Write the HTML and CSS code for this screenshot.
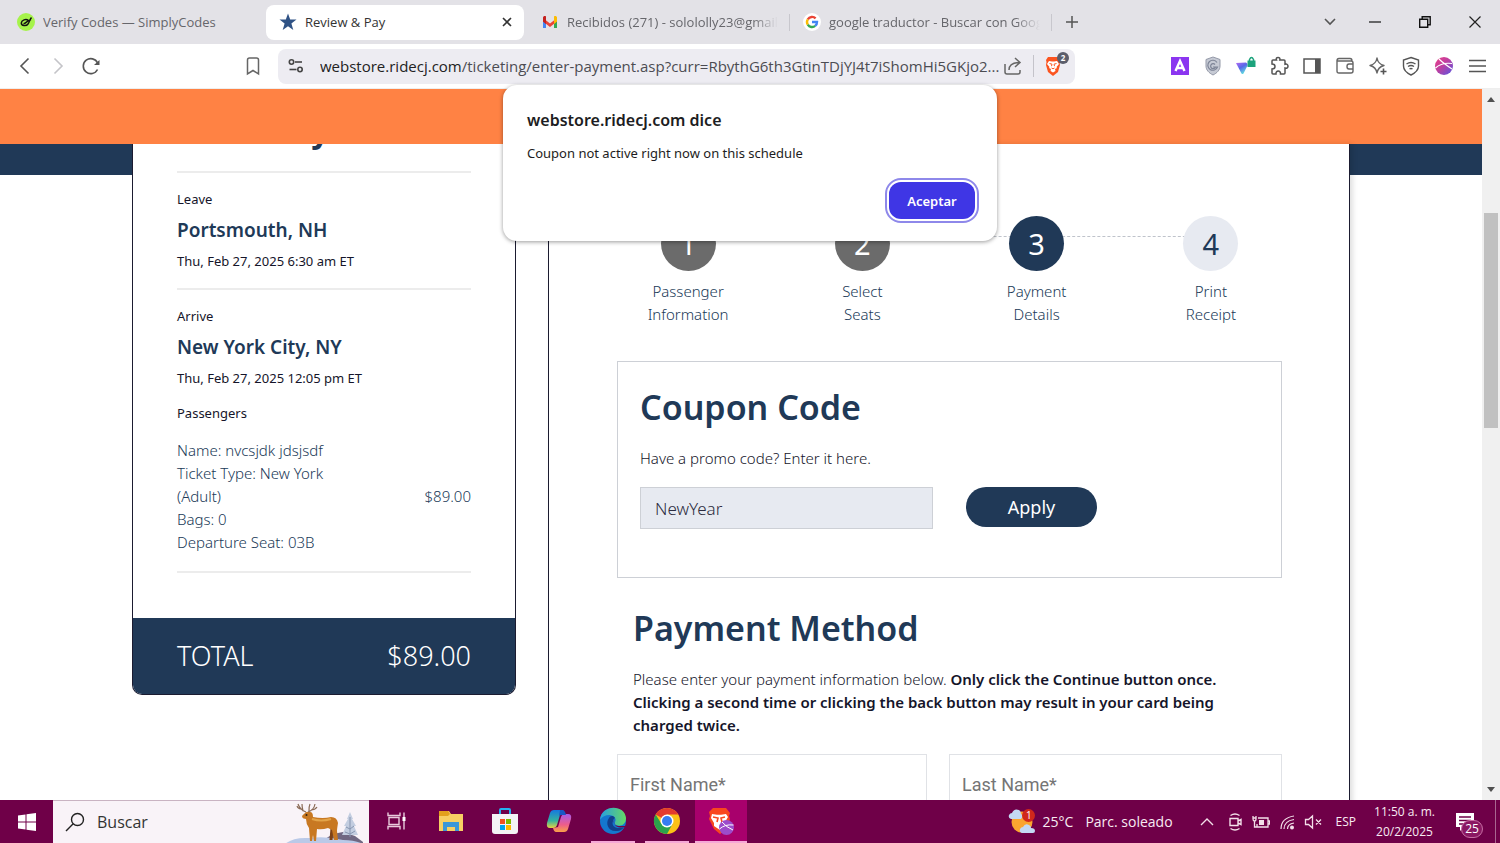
FILE: index.html
```
<!DOCTYPE html>
<html lang="en">
<head>
    <meta charset="UTF-8">
    <meta name="viewport" content="width=device-width, initial-scale=1.0">
    <title>Review &amp; Pay</title>
    <link rel="stylesheet" href="styles.css">
</head>
<body>
    <!-- Tabs -->
    <header class="tab-bar">
        <div class="tab">
            <svg class="favicon" viewBox="0 0 18 18"><circle cx="9" cy="9" r="9" fill="#a6f34b"/><path d="M11.500 7.500C9 5.500 4.500 7 4.300 10c0 3 5 3.500 6.700 1C12.500 9.500 12 7.500 14.500 4.500M6.500 10.500c2 .5 3.500-3 7.500-4" fill="none" stroke="#111" stroke-width="1.500"/></svg>
            <span class="tab-title">Verify Codes — SimplyCodes</span>
        </div>
        <div class="tab active">
            <svg class="favicon" viewBox="0 0 18 18"><path d="M9 .5l2.200 6H17.500l-5.100 4 1.900 6.500L9 13.200 3.700 17l1.900-6.500L.5 6.500h6.300z" fill="#2f5285"/></svg>
            <span class="tab-title">Review &amp; Pay</span>
            <button class="tab-close" aria-label="Close tab"><svg width="10" height="10" viewBox="0 0 10 10"><path d="M1 1l8 8M9 1L1 9" stroke="#333" stroke-width="1.600"/></svg></button>
        </div>
        <div class="tab divided">
            <svg class="favicon" viewBox="0 0 18 18"><path d="M2 4v11h3V8z" fill="#4285f4"/><path d="M16 4v11h-3V8z" fill="#34a853"/><path d="M2 5l7 5.500L16 5v3.500L9 14 2 8.500z" fill="#ea4335"/><path d="M2 8.500V5c0-2 2-2.500 3-1.500V11z" fill="#c5221f"/><path d="M16 8.500V5c0-2-2-2.500-3-1.500V11z" fill="#fbbc04"/></svg>
            <span class="tab-title faded">Recibidos (271) - solololly23@gmail</span>
        </div>
        <div class="tab divided">
            <svg class="favicon" viewBox="0 0 18 18"><circle cx="9" cy="9" r="9" fill="#fff"/><g fill="none" stroke-width="2.400"><path d="M4.800 6.300A5 5 0 0 1 12.600 5.400" stroke="#ea4335"/><path d="M4.800 6.300a5 5 0 0 0 0 5.400" stroke="#fbbc05"/><path d="M4.800 11.700a5 5 0 0 0 7.400 1.200" stroke="#34a853"/><path d="M12.200 12.900A5 5 0 0 0 14 9H9" stroke="#4285f4"/></g></svg>
            <span class="tab-title faded">google traductor - Buscar con Goog</span>
        </div>
        <button class="new-tab" aria-label="New tab"><svg width="12" height="12" viewBox="0 0 12 12"><path d="M6 0v12M0 6h12" stroke="#555" stroke-width="1.500"/></svg></button>
        <div class="window-controls">
            <button class="tab-search" aria-label="Search tabs"><svg width="12" height="12" viewBox="0 0 12 12"><path d="M1 3l5 5 5-5" fill="none" stroke="#555" stroke-width="1.600"/></svg></button>
            <button aria-label="Minimize"><svg width="12" height="12" viewBox="0 0 12 12"><path d="M0 6h12" stroke="#222" stroke-width="1.300"/></svg></button>
            <button aria-label="Restore"><svg width="12" height="12" viewBox="0 0 12 12"><path d="M.7 3.200h8v8h-8zM3.200 3V.7h8v8H9" fill="none" stroke="#111" stroke-width="1.400"/></svg></button>
            <button aria-label="Close"><svg width="12" height="12" viewBox="0 0 12 12"><path d="M.5.5l11 11M11.500.5L.5 11.500" stroke="#222" stroke-width="1.200"/></svg></button>
        </div>
    </header>

    <!-- Address bar -->
    <nav class="toolbar">
        <div class="nav-buttons">
            <button aria-label="Back"><svg viewBox="0 0 22 22"><path d="M14.500 3.500L7 11l7.500 7.500" fill="none" stroke="#555" stroke-width="1.600"/></svg></button>
            <button aria-label="Forward"><svg viewBox="0 0 22 22"><path d="M7.500 3.500L15 11l-7.500 7.500" fill="none" stroke="#c4c4c8" stroke-width="1.600"/></svg></button>
            <button aria-label="Reload"><svg viewBox="0 0 22 22"><path d="M17.500 14.500A7.500 7.500 0 1 1 17.600 8" fill="none" stroke="#555" stroke-width="1.600"/><path d="M19.500 5v5h-5.500z" fill="#555"/></svg></button>
        </div>
        <button class="bookmark" aria-label="Bookmark"><svg viewBox="0 0 22 22"><path d="M5.500 5q0-2 2-2h7q2 0 2 2v14L11 15.500 5.500 19z" fill="none" stroke="#666" stroke-width="1.500"/></svg></button>
        <div class="address">
            <svg class="site-info" viewBox="0 0 16 16"><g fill="none" stroke="#444" stroke-width="1.600"><circle cx="3.500" cy="4" r="2.200"/><path d="M7 4h7"/><circle cx="12" cy="11.500" r="2.200"/><path d="M1.500 11.500h7"/></g></svg>
            <a class="url" href="#">webstore.ridecj.com<span>/ticketing/enter-payment.asp?curr=RbythG6th3GtinTDjYJ4t7iShomHi5GKjo2...</span></a>
            <button aria-label="Share"><svg viewBox="0 0 22 22"><path d="M3 9v8q0 2 2 2h11q2 0 2-2v-2M7 15q0-7 10-7.500M13 3l5 4.500-5 4.500" fill="none" stroke="#666" stroke-width="1.500"/></svg></button>
            <button class="shields" aria-label="Brave Shields">
                <svg viewBox="0 0 22 22"><path d="M6 2h10l2 3-.5 2 .5 3-2 7-5 4-5-4-2-7 .5-3L4 5z" fill="#fb5420"/><path d="M7 6l3 .6h2L15 6l2 3-2.500 3 .5 1-2 1 .5 2-2.500 1.600L8.500 16l.5-2-2-1 .5-1L5 9z" fill="#fff"/><path d="M7.500 8.500l2.500.7-.5 2M14.500 8.500l-2.500.7.5 2M9.500 13l1.500.8 1.500-.8" stroke="#fb5420" fill="none"/></svg>
                <span class="badge">2</span>
            </button>
        </div>
        <div class="extensions">
            <button aria-label="Extension A"><svg viewBox="0 0 22 22"><path d="M2 2h18v18H2z" fill="#8b35f0"/><path d="M6.500 16L11 6l4.500 10M8 13h6" fill="none" stroke="#fff" stroke-width="2.400"/></svg></button>
            <button aria-label="Protection"><svg viewBox="0 0 22 22"><path d="M11 2l7 2.500V11c0 4-3 7-7 9-4-2-7-5-7-9V4.500z" fill="#c6cad4" stroke="#9499a8"/><path d="M15 7.500A5 5 0 1 0 15.500 12H11M13 9.500a2.500 2.500 0 1 0 .5 2.500" fill="none" stroke="#7d8496" stroke-width="1.200"/></svg></button>
            <button aria-label="VPN"><svg viewBox="0 0 22 22"><defs><linearGradient id="vpn" x1="0" y1="0" x2=".6" y2="1"><stop offset="0" stop-color="#b56cf5"/><stop offset=".5" stop-color="#5868e8"/><stop offset="1" stop-color="#60e0e0"/></linearGradient></defs><path d="M1 8l10-.5q2 1 1.500 3l-4 8q-1 1-2 0z" fill="url(#vpn)"/><path d="M14.500 6V4.500q2-4 4 0V6" fill="none" stroke="#1ca37c" stroke-width="1.500"/><path d="M12.500 5.500h8V12h-8z" fill="#1ca37c"/></svg></button>
            <button aria-label="Extensions"><svg viewBox="0 0 22 22"><path d="M4 6q0-1 1-1h3.500C7 1.500 13 1.500 11.800 5H16q1 0 1 1v3.300c4-1.300 4 5 0 3.700V18q0 1-1 1h-3.500c.5-4-5-4-4.500 0H5q-1 0-1-1v-4c4 0 4-5 0-5z" fill="none" stroke="#555" stroke-width="1.500"/></svg></button>
            <button aria-label="Sidebar"><svg viewBox="0 0 22 22"><path d="M3 4h16v14H3z" fill="none" stroke="#555" stroke-width="1.500"/><path d="M14 4h5v14h-5z" fill="#555"/></svg></button>
            <button aria-label="Wallet"><svg viewBox="0 0 22 22"><path d="M3 6q0-2.500 2-2.500h11q2 0 2 2.500M3 6h14q2 0 2 2v8q0 2-2 2H5q-2 0-2-2zM19 9h-4q-2 0-2 2.500t2 2.500h4" fill="none" stroke="#666" stroke-width="1.400"/></svg></button>
            <button aria-label="Leo AI"><svg viewBox="0 0 22 22"><path d="M10 3q1 6 7 7.500-6 1.500-7 7.500-1-6-7-7.500Q9 9 10 3z" fill="none" stroke="#666" stroke-width="1.400" stroke-linejoin="round"/><path d="M16.500 13.500v6M13.500 16.500h6" stroke="#555" stroke-width="1.600"/></svg></button>
            <button aria-label="Brave VPN"><svg viewBox="0 0 22 22"><path d="M11 2.500l7.500 2.500v6c0 4-3.500 7-7.500 9-4-2-7.500-5-7.500-9V5z" fill="none" stroke="#555" stroke-width="1.400"/><path d="M6.500 9q4.500-3 9 0M8 11.500q3-2 6 0M9.500 14q1.500-1 3 0" fill="none" stroke="#555" stroke-width="1.400"/></svg></button>
            <button aria-label="Profile"><svg viewBox="0 0 22 22"><defs><linearGradient id="ball" x1="0" y1="0" x2="1" y2="1"><stop offset="0" stop-color="#ee3f87"/><stop offset=".45" stop-color="#bd3fa0"/><stop offset="1" stop-color="#5555e5"/></linearGradient></defs><circle cx="11" cy="11" r="9" fill="url(#ball)"/><path d="M2.500 13Q9 7 19 8.500M6 4q4 4 13 10" fill="none" stroke="#fff" stroke-width="1.100"/></svg></button>
            <button aria-label="Menu"><svg viewBox="0 0 22 22"><path d="M3 5.500h17M3 11h17M3 16.500h17" stroke="#555" stroke-width="1.400"/></svg></button>
        </div>
    </nav>

    <!-- Web page -->
    <div class="viewport">
        <main class="site">
            <div class="notice"></div>
            <div class="container">
                <aside class="summary">
                    <div class="summary-body">
                        <h2 class="summary-title">Summary</h2>
                        <hr>
                        <p class="label">Leave</p>
                        <h3>Portsmouth, NH</h3>
                        <p class="label">Thu, Feb 27, 2025 6:30 am ET</p>
                        <hr>
                        <p class="label">Arrive</p>
                        <h3>New York City, NY</h3>
                        <p class="label">Thu, Feb 27, 2025 12:05 pm ET</p>
                        <p class="label passengers">Passengers</p>
                        <div class="fare">
                            <p>Name: nvcsjdk jdsjsdf<br>Ticket Type: New York (Adult)<br>Bags: 0<br>Departure Seat: 03B</p>
                            <span>$89.00</span>
                        </div>
                        <hr>
                    </div>
                    <div class="total"><span>TOTAL</span><span>$89.00</span></div>
                </aside>

                <section class="checkout">
                    <ol class="steps">
                        <li class="done"><span class="circle">1</span>Passenger<br>Information</li>
                        <li class="done"><span class="circle">2</span>Select<br>Seats</li>
                        <li class="current"><span class="circle">3</span>Payment<br>Details</li>
                        <li><span class="circle">4</span>Print<br>Receipt</li>
                    </ol>

                    <form class="coupon">
                        <h1>Coupon Code</h1>
                        <label for="promo">Have a promo code? Enter it here.</label>
                        <div class="coupon-row">
                            <input id="promo" type="text" value="NewYear">
                            <button type="button">Apply</button>
                        </div>
                    </form>

                    <div class="payment">
                        <h1>Payment Method</h1>
                        <p>Please enter your payment information below. <strong>Only click the Continue button once. Clicking a second time or clicking the back button may result in your card being charged twice.</strong></p>
                    </div>
                    <form class="name-fields">
                        <input type="text" placeholder="First Name*" aria-label="First Name">
                        <input type="text" placeholder="Last Name*" aria-label="Last Name">
                    </form>
                </section>
            </div>
        </main>
        <div class="scrollbar">
            <svg width="8" height="5" viewBox="0 0 8 5"><path d="M0 5l4-5 4 5z" fill="#505050"/></svg>
            <div class="track"><div class="thumb"></div></div>
            <svg width="8" height="5" viewBox="0 0 8 5"><path d="M0 0l4 5 4-5z" fill="#505050"/></svg>
        </div>
    </div>

    <!-- Alert -->
    <div class="alert" role="alertdialog" aria-labelledby="alertTitle">
        <h2 id="alertTitle">webstore.ridecj.com dice</h2>
        <p>Coupon not active right now on this schedule</p>
        <button>Aceptar</button>
    </div>

    <!-- Windows taskbar -->
    <footer class="taskbar">
        <button class="start" aria-label="Inicio"><svg width="20" height="20" viewBox="0 0 20 20"><path d="M1 3.500l7.500-1v7H1zM9.500 2.300L19 1v8.500H9.500zM1 10.500h7.500v7l-7.500-1zM9.500 10.500H19V19l-9.500-1.300z" fill="#fff"/></svg></button>
        <label class="search">
            <svg width="20" height="20" viewBox="0 0 20 20"><circle cx="12.500" cy="7.500" r="6" fill="none" stroke="#222" stroke-width="1.400"/><path d="M8.200 11.800L1 19" stroke="#222" stroke-width="1.400"/></svg>
            <input type="text" placeholder="Buscar" aria-label="Buscar">
            <svg class="deer" width="84" height="43" viewBox="0 0 84 43">
                <path d="M40 38l8-5 10-2 12 4 8 6v2H40z" fill="#706782"/>
                <path d="M65 11l-3 7h1l-4 7h2l-4 9h16l-4-9h2l-4-7h1z" fill="#c3cde0"/><path d="M65 16v20M61 26l4 2 4-3M60 31l5 2 5-3" fill="none" stroke="#8795b0"/>
                <path d="M0 43q8-7 24-6 18-2 34 2 12 0 20 4z" fill="#bac9e8"/>
                <path d="M47 27l-1 12" stroke="#7f4214" stroke-width="3"/>
                <path d="M19 13q2-3 6-2 3 0 3 5 10 2 18 0 6 0 7 6-1 6-1 8l1 9h-4l-2-10-4-2q-6 2-11 1l-1 12h-2l-1-6-1 6h-2l-1-13q-3-4-3-9-3 0-4-2 0-2 2-3z" fill="#c87822"/>
                <path d="M27 18q9 3 19 0" stroke="#e3a449" stroke-width="2" fill="none"/>
                <path d="M21 11q-6-2-8-8m4 5q-4 0-5-3m6 5q-1-4-1-7m6 8q6-2 7-8m-4 6q4 0 6-3m-8 4q0-5 1-7" stroke="#8a6a55" stroke-width="1.200" fill="none"/>
                <circle cx="21.500" cy="14" r="1" fill="#321"/>
            </svg>
        </label>
        <div class="apps">
            <button aria-label="Vista de tareas"><svg width="20" height="20" viewBox="0 0 20 20"><path d="M1 1.500v3h12v-3M1 18.500v-3h12v3M2 6.500h10v7H2zM17 1.500v17" fill="none" stroke="#e9cbdc" stroke-width="1.400"/><path d="M15.500 6h3v4h-3z" fill="#fff"/></svg></button>
            <button aria-label="Explorador"><svg width="26" height="26" viewBox="0 0 26 26"><path d="M1 4q0-1 1-1h9l2 3h12v17H1z" fill="#f7cf63"/><path d="M1 3h9l2 3-2 2H1z" fill="#e3a01c"/><path d="M5 23v-9h16v9h-4v-4H9v4z" fill="#3b97d8"/></svg></button>
            <button aria-label="Microsoft Store"><svg width="28" height="28" viewBox="0 0 28 28"><path d="M9 8V3q0-1 1-1h8q1 0 1 1v5" fill="none" stroke="#25b2f1" stroke-width="2"/><path d="M1 7h26v17q0 3-3 3H4q-3 0-3-3z" fill="#f3f3f5"/><path d="M9 12h5v5H9z" fill="#f25022"/><path d="M15 12h5v5h-5z" fill="#7fba00"/><path d="M9 18h5v5H9z" fill="#00a4ef"/><path d="M15 18h5v5h-5z" fill="#ffb900"/></svg></button>
            <button aria-label="Copilot"><svg width="26" height="26" viewBox="0 0 26 26"><defs><linearGradient id="c1" x1="0" y1="0" x2="0" y2="1"><stop offset="0" stop-color="#1577e0"/><stop offset=".6" stop-color="#35b39e"/><stop offset="1" stop-color="#e8d241"/></linearGradient><linearGradient id="c2" x1="0" y1="0" x2="0" y2="1"><stop offset="0" stop-color="#a85be8"/><stop offset=".6" stop-color="#ee5d89"/><stop offset="1" stop-color="#f9a248"/></linearGradient></defs><path d="M8 2h8q2 0 3 4l-5 1-3 10q-1 3-4 3H4q-4 0-3-5l3-10q1-3 4-3z" fill="url(#c1)"/><path d="M18 24h-8q-2 0-3-4l5-1 3-10q1-3 4-3h3q4 0 3 5l-3 10q-1 3-4 3z" fill="url(#c2)"/><path d="M14 2h2q3 0 4 5h-5l-2 1z" fill="#1958c5"/></svg></button>
            <button class="running" aria-label="Edge"><svg width="28" height="28" viewBox="0 0 28 28"><defs><linearGradient id="e1" x1="0" y1="0" x2="1" y2="0"><stop offset="0" stop-color="#279ee0"/><stop offset="1" stop-color="#65d865"/></linearGradient></defs><circle cx="14" cy="14" r="13" fill="#1477ce"/><path d="M1 13C2-3 26-3 27 11c0 7-6 9-10 7-3-2 1-4-1-7-3-5-12-3-15 2z" fill="url(#e1)"/><path d="M10 11c-4 5-1 14 8 13 3 0 6-2 7-4-8 3-13-1-11-6 0-2 2-3 2-3-2-3-5-2-6 0z" fill="#123f8c"/><path d="M15.500 12c-2 3 0 7 4 7h8v2l-3-1c-7 2-11-3-9-8z" fill="#72004a"/></svg></button>
            <button class="running" aria-label="Chrome"><svg width="28" height="28" viewBox="0 0 28 28"><circle cx="14" cy="14" r="13" fill="#fbc116"/><path d="M14 14L2.700 7.500A13 13 0 0 1 25.300 7.500H14z" fill="#e33b2e"/><path d="M2.700 7.500A13 13 0 0 0 14 27l5.500-10L14 14 8.500 17z" fill="#2ba24c"/><circle cx="14" cy="14" r="6.500" fill="#fff"/><circle cx="14" cy="14" r="5" fill="#367cf1"/></svg></button>
            <button class="running focused" aria-label="Brave"><svg width="28" height="28" viewBox="0 0 28 28"><path d="M6 1h13l4 5-1 3 1 3-4 10-6 5-6-5L2 12l1-3-1-4z" fill="#f9471e"/><path d="M5 7l5 .7h4L19 7l2 3-3 5v4l-5 4-6-4v-3l-3-5z" fill="#fff"/><path d="M6 10l5 1-1 4M18 10l-4 1 1 4" stroke="#f9471e" stroke-width="1.600" fill="none"/><circle cx="19.500" cy="20.500" r="7.500" fill="#9c4bcb"/><path d="M12.500 22Q18 17 26.500 18M15 15q4 5 11 8" fill="none" stroke="#fff"/></svg></button>
        </div>
        <div class="tray">
            <a class="weather" href="#">
                <svg width="28" height="28" viewBox="0 0 28 28"><circle cx="14" cy="14" r="10.500" fill="#fba530"/><path d="M3 11q-3-1-2-4 1-2 3-2 2-5 7-3 2 1 2 4 3 2 0 5z" fill="#c4d9f5"/><path d="M14 25q-3-1-2-4 1-2 3-2 2-4 6-2 2 1 2 3 4 0 4 3 0 2-2 2z" fill="#c4d9f5"/><circle cx="20.500" cy="7.500" r="6.500" fill="#d0281b"/><text x="18" y="11" class="alert-count">1</text></svg>
                <span>25°C</span><span>Parc. soleado</span>
            </a>
            <button aria-label="Iconos ocultos"><svg width="14" height="14" viewBox="0 0 14 14"><path d="M1 10l6-6 6 6" fill="none" stroke="#f3dfe9" stroke-width="1.400"/></svg></button>
            <div class="status">
                <svg width="18" height="18" viewBox="0 0 18 18"><path d="M4 5.500h8v7H4zM12 8l3-1.500v5L12 10M4.500 2.500q4.500-3 9 0M4.500 15.500q4.500 3 9 0" fill="none" stroke="#f3dfe9" stroke-width="1.400"/></svg>
                <svg width="18" height="18" viewBox="0 0 18 18"><path d="M6 5h10v9H5v-3M16 8h1.500v3H16M1 3v3q0 2 1.500 2T4 6V3M.5 5h4M2.500 8v6h3" fill="none" stroke="#f3dfe9" stroke-width="1.300"/><path d="M7 7h5v5H7z" fill="#f3dfe9"/></svg>
                <svg width="18" height="18" viewBox="0 0 18 18"><path d="M3 16Q3 5 16 3M6 16q0-8 10-9.500M9.500 16q0-5 6.500-6" fill="none" stroke="#f3dfe9" stroke-width="1.200"/><circle cx="14" cy="14.500" r="2" fill="#f3dfe9"/></svg>
                <svg width="18" height="18" viewBox="0 0 18 18"><path d="M1.500 6.500h3L8.500 3v12l-4-3.500h-3zM12 6.500l5 5M17 6.500l-5 5" fill="none" stroke="#f3dfe9" stroke-width="1.300"/></svg>
            </div>
            <span class="lang">ESP</span>
            <div class="clock">11:50 a. m.<br>20/2/2025</div>
            <button class="notifications" aria-label="Notificaciones">
                <svg width="18" height="18" viewBox="0 0 18 18"><path d="M0 0h18v14H8l-4 4v-4H0z" fill="#fff"/><path d="M3 4h12M3 7.500h12M3 11h8" stroke="#6f0048" stroke-width="1.300"/></svg>
                <span class="badge">25</span>
            </button>
        </div>
    </footer>
</body>
</html>
```
FILE: styles.css
```
* {
    box-sizing: border-box;
}

body {
    font-family: "Open Sans", "Noto Sans", sans-serif;
    margin: 0;
    height: 100vh;
    display: flex;
    flex-direction: column;
    overflow: hidden;
    position: relative;
    background-color: white;
}

h1, h2, h3, p {
    margin: 0;
}

button {
    font-family: inherit;
    border: none;
    background: none;
    padding: 0;
    cursor: pointer;
    display: flex;
    align-items: center;
    justify-content: center;
}

a {
    color: inherit;
    text-decoration: none;
}

svg {
    flex-shrink: 0;
}

/* Tabs */
.tab-bar {
    height: 44px;
    background-color: #e3e2e7;
    display: flex;
    align-items: center;
    gap: 4px;
    padding: 0 0 0 4px;
}

.tab {
    flex: 0 1 258px;
    min-width: 0;
    height: 35px;
    padding: 0 8px 0 13px;
    display: flex;
    align-items: center;
    gap: 8px;
    border-radius: 8px;
    position: relative;
    font-size: 13px;
    color: #66666b;
}

.tab.active {
    padding-right: 12px;
    background-color: white;
    color: #333;
}

.tab.divided::after {
    content: "";
    position: absolute;
    right: -4px;
    top: 9px;
    width: 1px;
    height: 17px;
    background-color: #c8c7cd;
}

.favicon {
    width: 18px;
    height: 18px;
}

.tab-title {
    flex: 1;
    white-space: nowrap;
    overflow: hidden;
}

.tab-title.faded {
    mask-image: linear-gradient(to right, black 88%, transparent);
}

.new-tab {
    width: 36px;
    height: 36px;
    margin-left: 2px;
}

.window-controls {
    display: flex;
    margin-left: auto;
}

.window-controls button {
    width: 50px;
    height: 44px;
}

.window-controls .tab-search {
    width: 40px;
}

/* Address bar */
.toolbar {
    height: 45px;
    display: flex;
    align-items: center;
    padding: 0 12px 0 14px;
    border-bottom: 1px solid #eee;
}

.toolbar svg {
    width: 22px;
    height: 22px;
}

.nav-buttons, .extensions {
    display: flex;
    gap: 11px;
}

.extensions {
    margin-left: auto;
}

.bookmark {
    margin: 0 14px 0 140px;
}

.address {
    flex: 0 1 797px;
    min-width: 0;
    height: 35px;
    display: flex;
    align-items: center;
    border-radius: 8px;
    background-color: #edecf2;
    padding: 0 11px 0 10px;
}

.address .site-info {
    width: 16px;
    height: 16px;
    margin: 0 16px 0 0;
}

.url {
    flex: 1;
    font-size: 15px;
    color: #222;
    white-space: nowrap;
    overflow: hidden;
}

.url span {
    color: #4c4c52;
}

.shields {
    position: relative;
    margin-left: 9px;
    padding-left: 8px;
    border-left: 1px solid #c4c3ca;
}

.shields .badge {
    position: absolute;
    right: -5px;
    top: -3px;
    width: 12px;
    height: 12px;
    border-radius: 6px;
    background-color: #5b5d6b;
    color: white;
    font-size: 8px;
    line-height: 12px;
    font-weight: 700;
}

/* Web page */
.viewport {
    flex: 1;
    min-height: 0;
    display: flex;
}

.site {
    flex: 1;
    overflow: hidden;
    font-family: "Noto Sans", "Open Sans", sans-serif;
    color: #203957;
    background: linear-gradient(#203957, #203957) 0 55px / 100% 31px no-repeat;
}

.notice {
    height: 55px;
    background-color: #ff8244;
}

.container {
    max-width: 1218px;
    margin: 0 auto;
    background-color: white;
    display: grid;
    grid-template-columns: 384px 1fr;
    gap: 32px;
    align-items: start;
}

.summary {
    overflow: hidden;
    border: 1px solid #1b1b30;
    border-top: none;
    border-radius: 0 0 10px 10px;
}

.summary-body {
    padding: 0 44px 30px;
}

.summary-title {
    margin: -34px 0 21px;
    font-size: 32px;
    line-height: 40px;
}

.summary hr {
    height: 2px;
    border: none;
    background-color: #ececec;
    margin: 15px 0;
}

.summary h3 {
    font-size: 19px;
    line-height: 27px;
    font-weight: 600;
    margin: 6px 0;
}

.label {
    font-size: 13px;
    line-height: 23px;
    color: #15152a;
}

.passengers {
    margin: 12px 0 14px;
}

.fare {
    display: flex;
    justify-content: space-between;
    align-items: center;
    font-size: 15px;
    line-height: 23px;
    font-weight: 300;
    margin-bottom: 17px;
}

.fare p {
    width: 170px;
}

.total {
    display: flex;
    justify-content: space-between;
    padding: 19px 44px;
    background-color: #203957;
    color: white;
    font-size: 27px;
    line-height: 38px;
    font-weight: 300;
}

.checkout {
    padding: 72px 67px 0 68px;
    border: 1px solid #1b1b30;
    border-width: 0 1px;
    box-shadow: 3px 0 5px rgba(0, 0, 0, 0.12);
}

.steps {
    list-style: none;
    margin: 0 -16px 35px;
    padding: 0;
    display: grid;
    grid-template-columns: repeat(4, 1fr);
    text-align: center;
    font-size: 15px;
    line-height: 23px;
    font-weight: 300;
}

.steps li {
    position: relative;
}

.steps li + li::before {
    content: "";
    position: absolute;
    right: 50%;
    top: 20px;
    width: 100%;
    border-top: 1px dashed #bfc3cb;
}

.circle {
    position: relative;
    z-index: 1;
    display: block;
    width: 55px;
    height: 55px;
    margin: 0 auto 9px;
    border-radius: 50%;
    background-color: #e7eaf1;
    font-size: 29px;
    line-height: 55px;
    font-weight: 400;
}

.done .circle {
    background-color: #6b6b6b;
    color: white;
}

.current .circle {
    background-color: #203957;
    color: white;
}

.checkout h1 {
    font-size: 34px;
    line-height: 46px;
    font-weight: 600;
}

.coupon {
    border: 1px solid #cdd0d6;
    padding: 22px 22px 48px;
}

.coupon label {
    display: block;
    margin: 16px 0 17px;
    font-size: 15px;
    line-height: 24px;
    color: #15152a;
    font-weight: 300;
}

.coupon-row {
    display: flex;
    align-items: flex-start;
    gap: 33px;
}

.coupon input {
    width: 293px;
    height: 42px;
    padding: 0 14px;
    border: 1px solid #cdd0d6;
    background-color: #e7eaf1;
    color: #2c2c40;
    font-family: inherit;
    font-size: 17px;
    font-weight: 300;
}

.coupon button {
    width: 131px;
    height: 40px;
    border-radius: 20px;
    background-color: #203957;
    color: white;
    font-size: 18px;
}

.payment {
    padding: 27px 16px 17px;
}

.payment p {
    margin-top: 17px;
    font-size: 15px;
    line-height: 23px;
    font-weight: 300;
    color: #15152a;
}

.payment strong {
    font-weight: 600;
}

.name-fields {
    display: grid;
    grid-template-columns: 310px 1fr;
    gap: 22px;
}

.name-fields input {
    height: 60px;
    min-width: 0;
    padding: 0 12px;
    border: 1px solid #e0e2e6;
    font-family: Roboto, sans-serif;
    font-size: 18px;
}

.name-fields input::placeholder {
    color: #757575;
}

/* Scrollbar */
.scrollbar {
    width: 18px;
    background-color: #f0f0f0;
    display: flex;
    flex-direction: column;
    align-items: center;
    padding: 8px 0;
}

.track {
    flex: 1;
    width: 14px;
    padding-top: 111px;
}

.thumb {
    height: 215px;
    background-color: #c1c1c1;
}

/* Alert */
.alert {
    position: absolute;
    top: 85px;
    left: 0;
    right: 0;
    width: 494px;
    margin: 0 auto;
    padding: 22px 22px 22px 24px;
    border-radius: 14px;
    background-color: white;
    box-shadow: 0 1px 4px rgba(0, 0, 0, 0.4);
    color: #1d1d22;
    font-family: "Noto Sans", "Open Sans", sans-serif;
    z-index: 2;
}

.alert h2 {
    font-size: 16px;
    line-height: 26px;
    font-weight: 600;
}

.alert p {
    margin-top: 9px;
    font-size: 13px;
    line-height: 22px;
}

.alert button {
    width: 86px;
    height: 37px;
    margin: 18px 0 0 auto;
    border-radius: 12px;
    background-color: #3f36e5;
    color: white;
    font-size: 13px;
    font-weight: 600;
    outline: 2px solid #8e88ea;
    outline-offset: 2px;
}

/* Taskbar */
.taskbar {
    height: 43px;
    background-color: #6f0048;
    color: #f8ebf2;
    display: flex;
    align-items: stretch;
}

.start {
    width: 53px;
}

.search {
    width: 316px;
    background-color: #f9f3f8;
    border-top: 1px solid #c9b3c2;
    display: flex;
    align-items: center;
    padding: 0 0 0 12px;
}

.search input {
    flex: 1;
    min-width: 0;
    margin-left: 12px;
    padding: 0;
    border: none;
    background: none;
    font-family: inherit;
    font-size: 16px;
}

.search input::placeholder {
    color: #333;
}

.apps {
    display: flex;
    gap: 2px;
    padding-left: 2px;
}

.apps button {
    width: 52px;
    border-bottom: 2px solid transparent;
    position: relative;
}

.running::after {
    content: "";
    position: absolute;
    left: 4px;
    right: 4px;
    bottom: -2px;
    height: 2px;
    background-color: #f5a8d7;
}

.apps .focused {
    background-color: #a8006c;
}

.focused::after {
    left: 0;
    right: 0;
}

.tray {
    margin-left: auto;
    display: flex;
    align-items: center;
    margin-right: 4px;
    padding-right: 21px;
    border-right: 1px solid #a86590;
}

.weather {
    display: flex;
    align-items: center;
    gap: 12px;
    margin-right: 27px;
    font-size: 14px;
}

.weather svg {
    margin-right: -5px;
}

.alert-count {
    font-size: 10px;
    fill: white;
}

.status {
    display: flex;
    gap: 8px;
    margin: 0 14px 0 12px;
}

.lang {
    font-size: 12px;
}

.clock {
    margin: 0 21px 0 18px;
    font-size: 12px;
    line-height: 20px;
    text-align: center;
}

.notifications {
    position: relative;
}

.notifications .badge {
    position: absolute;
    left: 5px;
    top: 7px;
    width: 22px;
    height: 18px;
    border: 1px solid #c76ea3;
    border-radius: 9px;
    background-color: #8a1862;
    color: white;
    font-size: 12px;
    line-height: 16px;
}
```
